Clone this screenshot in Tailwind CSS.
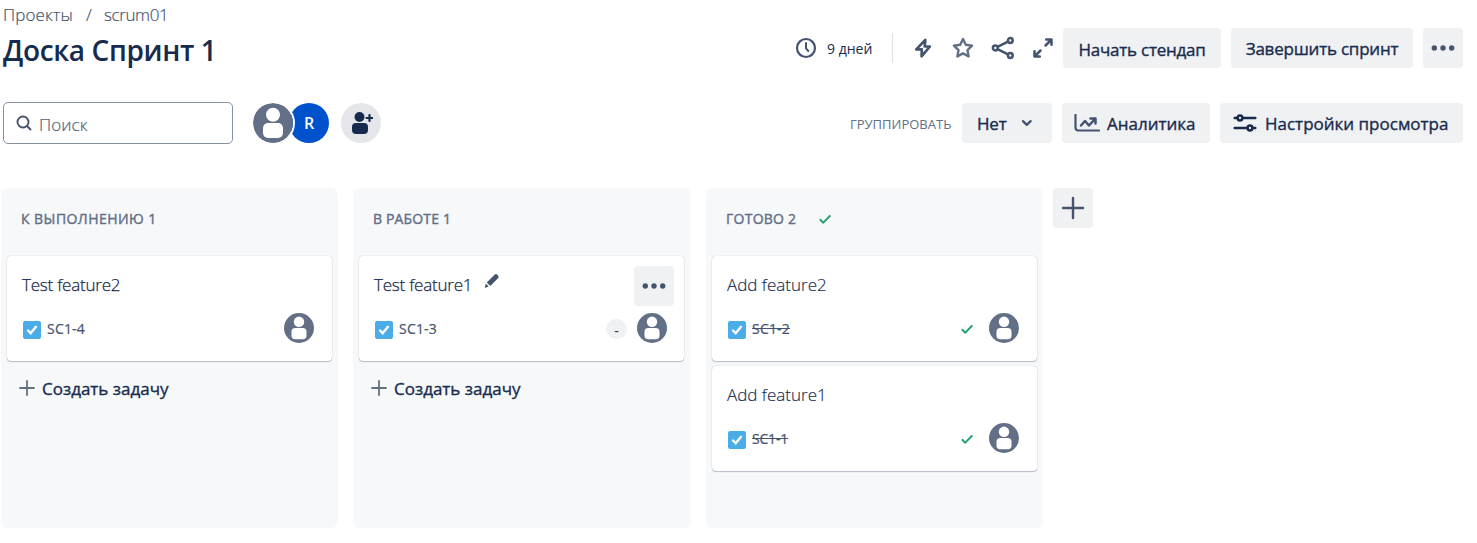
<!DOCTYPE html>
<html lang="ru">
<head>
<meta charset="utf-8">
<title>Доска Спринт 1</title>
<script src="https://cdn.jsdelivr.net/npm/@tailwindcss/browser@4"></script>
</head>
<body class="h-[543px] w-[1477px] overflow-hidden bg-white font-['Open_Sans','Noto_Sans',sans-serif] text-[17px] leading-6 text-[#172b4d]">
<svg class="hidden">
  <symbol id="avatar" viewBox="0 0 40 40"><circle cx="20" cy="20" r="20" fill="#626f86"/><circle cx="20" cy="11.800" r="7" fill="#fff"/><rect x="10" y="20" width="20" height="15" rx="5" fill="#fff"/></symbol>
  <symbol id="task" viewBox="0 0 18 18"><rect width="18" height="18" rx="2" fill="#4bade8"/><path d="M5 9.500l2.700 2.700L13 5.800" fill="none" stroke="#fff" stroke-width="2.400" stroke-linecap="round"/></symbol>
  <symbol id="dots" viewBox="0 0 24 8"><g fill="#44546f"><circle cx="3.300" cy="4" r="2.700"/><circle cx="12" cy="4" r="2.700"/><circle cx="20.700" cy="4" r="2.700"/></g></symbol>
  <symbol id="check" viewBox="0 0 14 12"><path d="M2.300 6.800l3 2.900 6.500-6.700" fill="none" stroke="#22a06b" stroke-width="1.900" stroke-linecap="round" stroke-linejoin="round"/></symbol>
  <symbol id="plus" viewBox="0 0 16 16"><path d="M8 1v14M1 8h14" fill="none" stroke="#626f86" stroke-width="1.800" stroke-linecap="round"/></symbol>
</svg>
<main class="flex flex-col pl-[3px] pr-[14px]">
  <nav class="flex h-7 items-center whitespace-nowrap pt-px font-light text-[#44546f] [-webkit-text-stroke:0.2px]">
    <span class="w-[83px] tracking-[0.1px]">Проекты</span><span class="w-[18px]">/</span><span class="tracking-[-0.4px]">scrum01</span>
  </nav>
  <header class="flex h-10 items-center whitespace-nowrap">
    <h1 class="pt-[3px] text-[28px] font-semibold leading-10 tracking-[-0.35px]">Доска Спринт 1</h1>
    <div class="ml-auto flex h-10 items-center">
      <svg class="size-[22px]" viewBox="0 0 22 22" fill="none" stroke="#44546f" stroke-width="2.200" stroke-linecap="round" stroke-linejoin="round"><circle cx="11" cy="11" r="9"/><path d="M11 6v5.300l2.300 2.700" stroke-width="2"/></svg>
      <span class="ml-[10px] w-[65px] pt-px text-[14px]">9 дней</span>
      <span class="h-[30px] w-px bg-[#dcdfe4]"></span>
      <svg class="ml-[20px] size-[20px]" viewBox="0 0 20 20"><path fill="none" stroke="#44546f" stroke-width="2.700" stroke-linejoin="round" d="M12.300 1.800L3.300 11.400H8.800L8.600 18.400L16.900 8.500H11.700z"/></svg>
      <svg class="ml-[18px] size-[24px]" viewBox="0 0 24 24"><path fill="none" stroke="#626f86" stroke-width="2.400" stroke-linejoin="round" d="M12 3l2.800 5.800 6.300.900-4.600 4.400 1.100 6.300-5.600-3-5.600 3 1.100-6.300L2.900 9.700l6.300-.900z"/></svg>
      <svg class="ml-[16px] size-[24px]" viewBox="0 0 24 24" fill="none" stroke="#44546f" stroke-width="2.500"><circle cx="4.300" cy="12" r="2.400"/><circle cx="19.300" cy="4.500" r="2.400"/><circle cx="19.300" cy="19.500" r="2.400"/><path d="M6.500 10.800L17 5.700M6.500 13.200l10.500 5.100"/></svg>
      <svg class="ml-[18px] size-[20px]" viewBox="0 0 20 20" fill="none" stroke="#44546f" stroke-width="2.500" stroke-linecap="round" stroke-linejoin="round"><path d="M13.200 1.500h5.300v5.300M18 2l-5.500 5.500M6.800 18.500H1.500v-5.300M2 18l5.500-5.500"/></svg>
      <button class="ml-[10px] h-10 w-[158px] rounded-[4px] bg-[#f0f1f3] pt-[3px] tracking-[-0.25px] [-webkit-text-stroke:0.35px]">Начать стендап</button>
      <button class="ml-[10px] h-10 w-[182px] rounded-[4px] bg-[#f0f1f3] pt-[2px] tracking-[-0.22px] [-webkit-text-stroke:0.35px]">Завершить спринт</button>
      <button class="ml-[10px] grid h-10 w-10 place-items-center rounded-[4px] bg-[#f0f1f3]"><svg class="h-2 w-6"><use href="#dots"/></svg></button>
    </div>
  </header>
  <section class="mt-[34px] flex h-[42px] items-center whitespace-nowrap">
    <div class="flex h-[42px] w-[230px] items-center rounded-[5px] border border-[#8590a2] pl-[12px]">
      <svg class="size-[17px]" viewBox="0 0 17 17" fill="none" stroke="#44546f" stroke-width="1.900" stroke-linecap="round"><circle cx="7" cy="7" r="5.500"/><path d="M11 11l3.500 3.500"/></svg>
      <span class="ml-[6px] pt-[3px] font-light tracking-[0.1px] text-[#505f79] [-webkit-text-stroke:0.2px]">Поиск</span>
    </div>
    <div class="ml-[20px] flex items-center">
      <svg class="relative z-10 size-10 rounded-full ring-2 ring-white"><use href="#avatar"/></svg>
      <span class="-ml-1 grid size-10 place-items-center rounded-full bg-[#0052cc] text-[16px] font-semibold text-white">R</span>
      <span class="ml-[12px] grid size-10 place-items-center rounded-full bg-[#e4e6ea]"><svg class="size-6" viewBox="0 0 24 24" fill="#172b4d"><circle cx="10.500" cy="6" r="5"/><rect x="3" y="12" width="16" height="11" rx="4"/><path d="M20.500 4v6M17.500 7h6" stroke="#172b4d" stroke-width="2.200" stroke-linecap="round"/></svg></span>
    </div>
    <div class="ml-auto flex h-10 items-center [-webkit-text-stroke:0.35px]">
      <span class="mr-[10px] w-[102px] pt-px text-[13px] text-[#626f86] [-webkit-text-stroke:0px]">ГРУППИРОВАТЬ</span>
      <button class="flex h-10 w-[90px] items-center rounded-[4px] bg-[#f0f1f3] pl-[15px]"><span class="w-[29px] pt-[2px] text-left tracking-[-0.2px]">Нет</span><svg class="ml-[15px] h-2 w-3" viewBox="0 0 12 8" fill="none" stroke="#44546f" stroke-width="2.400" stroke-linecap="round" stroke-linejoin="round"><path d="M2 2.200l3.800 3.600 3.800-3.600"/></svg></button>
      <button class="ml-[10px] flex h-10 w-[148px] items-center rounded-[4px] bg-[#f0f1f3] pl-[12px]"><svg class="mr-[7px] h-[18px] w-[26px]" viewBox="0 0 26 18" fill="none" stroke="#44546f" stroke-width="2.200" stroke-linecap="round" stroke-linejoin="round"><path d="M1.500 1v12.500q0 3 3 3H25"/><path stroke-width="2.500" d="M7 11.500l4-4.500 4 4.500 6-6.500M16.500 4.500H21.500v5"/></svg><span class="pt-[2px]">Аналитика</span></button>
      <button class="ml-[10px] flex h-10 w-[243px] items-center rounded-[4px] bg-[#f0f1f3] pl-[13px]"><svg class="mr-[8px] h-[18px] w-6" viewBox="0 0 24 18" fill="none" stroke="#172b4d" stroke-width="2.500" stroke-linecap="round"><path d="M1.700 4h3M9.500 4h12.800M1.700 14h12.500M19.500 14h2.800"/><circle cx="7" cy="4" r="2.400"/><circle cx="17" cy="14" r="2.400"/></svg><span class="pt-[2px]">Настройки просмотра</span></button>
    </div>
  </section>
  <section class="-ml-[2px] mt-[44px] flex whitespace-nowrap">
    <div class="mr-[15px] h-[340px] w-[337px] rounded-[7px] bg-[#f7f8f9] px-[6px]">
      <h2 class="flex h-[68px] items-start pl-[14px] pt-[19px] text-[14px] tracking-[0.45px] text-[#626f86] [-webkit-text-stroke:0.4px]">К ВЫПОЛНЕНИЮ 1</h2>
      <article class="h-[105px] w-[325px] rounded-[4px] bg-white px-[15px] pt-[17px] shadow-[0_1px_1px_#091e4240,0_0_1px_#091e424f]">
        <div class="h-6 font-light tracking-[-0.22px] [-webkit-text-stroke:0.25px]">Test feature2</div>
        <div class="mt-[16px] flex h-[30px] items-center"><svg class="ml-px mt-[3px] size-[18px]"><use href="#task"/></svg><span class="ml-[6px] pt-px text-[14px] tracking-[0.2px] text-[#44546f] [-webkit-text-stroke:0.2px]">SC1-4</span><svg class="ml-auto mr-[3px] size-[30px]"><use href="#avatar"/></svg></div>
      </article>
      <div class="flex h-[54px] items-center pl-[12px] [-webkit-text-stroke:0.35px]"><svg class="mr-[7px] size-4"><use href="#plus"/></svg><span class="pt-[2px]">Создать задачу</span></div>
    </div>
    <div class="mr-[15px] h-[340px] w-[338px] rounded-[7px] bg-[#f7f8f9] px-[6px]">
      <h2 class="flex h-[68px] items-start pl-[14px] pt-[19px] text-[14px] tracking-[0.15px] text-[#626f86] [-webkit-text-stroke:0.4px]">В РАБОТЕ 1</h2>
      <article class="h-[105px] w-[325px] rounded-[4px] bg-white px-[15px] pt-[17px] shadow-[0_1px_1px_#091e4240,0_0_1px_#091e424f]">
        <div class="flex h-6"><span class="w-[110px] font-light tracking-[-0.22px] [-webkit-text-stroke:0.25px]">Test feature1</span><svg class="size-4" viewBox="0 0 16 16" fill="#44546f"><path d="M.800 15l1-4.500 2.900 2.900zM2.800 9.500l7.700-7.700q1.400-1.400 2.800 0l.700.700q1.400 1.400 0 2.800l-7.700 7.700z"/></svg><button class="-mr-[5px] -mt-[7px] ml-auto grid h-10 w-10 place-items-center rounded-[4px] bg-[#f0f1f3]"><svg class="h-2 w-6"><use href="#dots"/></svg></button></div>
        <div class="mt-[16px] flex h-[30px] items-center"><svg class="ml-px mt-[3px] size-[18px]"><use href="#task"/></svg><span class="ml-[6px] pt-px text-[14px] tracking-[0.2px] text-[#44546f] [-webkit-text-stroke:0.2px]">SC1-3</span><span class="ml-auto mr-[10px] mt-[2px] grid h-5 w-[21px] place-items-center rounded-full bg-[#f0f1f3] text-[14px]">-</span><svg class="mr-[2px] size-[30px]"><use href="#avatar"/></svg></div>
      </article>
      <div class="flex h-[54px] items-center pl-[12px] [-webkit-text-stroke:0.35px]"><svg class="mr-[7px] size-4"><use href="#plus"/></svg><span class="pt-[2px]">Создать задачу</span></div>
    </div>
    <div class="mr-[10px] h-[340px] w-[337px] rounded-[7px] bg-[#f7f8f9] px-[6px]">
      <h2 class="flex h-[68px] items-start pl-[14px] pt-[19px] text-[14px] tracking-[0.25px] text-[#626f86] [-webkit-text-stroke:0.4px]"><span class="w-[92px]">ГОТОВО 2</span><svg class="mt-[6px] h-3 w-[14px]"><use href="#check"/></svg></h2>
      <article class="mb-[5px] h-[105px] w-[325px] rounded-[4px] bg-white px-[15px] pt-[17px] shadow-[0_1px_1px_#091e4240,0_0_1px_#091e424f]">
        <div class="h-6 font-light [-webkit-text-stroke:0.15px]">Add feature2</div>
        <div class="mt-[16px] flex h-[30px] items-center"><svg class="ml-px mt-[3px] size-[18px]"><use href="#task"/></svg><span class="ml-[6px] pt-px text-[14px] tracking-[0.2px] text-[#44546f] line-through [-webkit-text-stroke:0.2px]">SC1-2</span><svg class="ml-auto mr-[15px] mt-[2px] h-3 w-[14px]"><use href="#check"/></svg><svg class="mr-[3px] size-[30px]"><use href="#avatar"/></svg></div>
      </article>
      <article class="h-[105px] w-[325px] rounded-[4px] bg-white px-[15px] pt-[17px] shadow-[0_1px_1px_#091e4240,0_0_1px_#091e424f]">
        <div class="h-6 font-light [-webkit-text-stroke:0.15px]">Add feature1</div>
        <div class="mt-[16px] flex h-[30px] items-center"><svg class="ml-px mt-[3px] size-[18px]"><use href="#task"/></svg><span class="ml-[6px] pt-px text-[14px] tracking-[-0.2px] text-[#44546f] line-through [-webkit-text-stroke:0.2px]">SC1-1</span><svg class="ml-auto mr-[15px] mt-[2px] h-3 w-[14px]"><use href="#check"/></svg><svg class="mr-[3px] size-[30px]"><use href="#avatar"/></svg></div>
      </article>
    </div>
    <button class="grid size-10 place-items-center rounded-[4px] bg-[#f0f1f3]"><svg class="size-[24px]" viewBox="0 0 24 24"><path d="M12 2v20M2 12h20" stroke="#44546f" stroke-width="2.400" stroke-linecap="round"/></svg></button>
  </section>
</main>
</body>
</html>
